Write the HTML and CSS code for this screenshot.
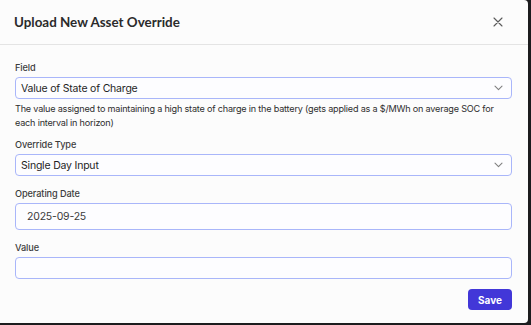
FILE: index.html
```html
<!DOCTYPE html>
<html>
<head>
<meta charset="utf-8">
<link rel="stylesheet" href="styles.css">
</head>
<body>
<div class="modal">
  <div class="modal-header">
    <h2 class="title">Upload New Asset Override</h2>
    <button class="close" aria-label="Close">
      <svg width="10" height="10" viewBox="0 0 10 10"><path d="M1 1 L9 9 M9 1 L1 9" stroke="#5a5a5a" stroke-width="1.1" stroke-linecap="round"/></svg>
    </button>
  </div>
  <div class="modal-body">
    <div class="field field-first">
      <label class="label">Field</label>
      <div class="control select">
        <span class="value">Value of State of Charge</span>
        <svg class="chev" width="9" height="6" viewBox="0 0 9 6"><path d="M1 1.2 L4.5 4.6 L8 1.2" fill="none" stroke="#808080" stroke-width="1.1" stroke-linecap="round" stroke-linejoin="round"/></svg>
      </div>
      <p class="help">The value assigned to maintaining a high state of charge in the battery (gets applied as a $/MWh on average SOC for each interval in horizon)</p>
    </div>
    <div class="field">
      <label class="label">Override Type</label>
      <div class="control select">
        <span class="value">Single Day Input</span>
        <svg class="chev" width="9" height="6" viewBox="0 0 9 6"><path d="M1 1.2 L4.5 4.6 L8 1.2" fill="none" stroke="#808080" stroke-width="1.1" stroke-linecap="round" stroke-linejoin="round"/></svg>
      </div>
    </div>
    <div class="field">
      <label class="label">Operating Date</label>
      <div class="control date">
        <span class="value date-value">2025-09-25</span>
      </div>
    </div>
    <div class="field field-last">
      <label class="label">Value</label>
      <div class="control"></div>
    </div>
    <div class="footer">
      <button class="save">Save</button>
    </div>
  </div>
</div>
</body>
</html>
```
FILE: styles.css
```css
html, body {
  margin: 0;
  padding: 0;
}
body {
  background: #1c1c1e;
  width: 531px;
  height: 325px;
  overflow: hidden;
  font-family: Inter, "Liberation Sans", sans-serif;
}
.modal {
  width: 528px;
  height: 323px;
  background: #fcfcfc;
  border-radius: 0 4px 4px 0;
  box-sizing: border-box;
}
.modal-header {
  height: 45px;
  box-sizing: border-box;
  border-bottom: 1px solid #e4e4e4;
  display: flex;
  align-items: center;
  justify-content: space-between;
  padding: 0 25px 0 14px;
}
.title {
  margin: 0;
  font-family: Lato, "Liberation Sans", sans-serif;
  font-weight: 700;
  font-size: 13.4px;
  color: #2b2b2b;
}
.close {
  border: 0;
  background: none;
  padding: 0;
  width: 10px;
  height: 10px;
  display: flex;
}
.modal-body {
  padding: 17px 16px 0 15px;
}
.field {
  display: flex;
  flex-direction: column;
  margin-bottom: 12px;
}
.field-first {
  margin-bottom: 9px;
}
.field-last {
  margin-bottom: 10px;
}
.label {
  font-size: 9.2px;
  line-height: 12px;
  letter-spacing: -0.1px;
  color: #3c3c3c;
  font-weight: 500;
  margin-bottom: 3px;
}
.control {
  height: 22px;
  box-sizing: border-box;
  border: 1px solid #a9b6fa;
  border-radius: 4px;
  background: #fdfdff;
  display: flex;
  align-items: center;
  padding: 0 8px 0 5px;
}
.select {
  justify-content: space-between;
}
.value {
  font-size: 10.5px;
  letter-spacing: -0.2px;
  color: #1f1f1f;
}
.date {
  height: 27px;
  padding-left: 11px;
}
.date-value {
  color: #3a3a3a;
}
.help {
  margin: 3px 0 0;
  font-size: 9.1px;
  line-height: 14px;
  letter-spacing: -0.2px;
  color: #2e2e2e;
}
.footer {
  display: flex;
  justify-content: flex-end;
}
.save {
  background: #4237d8;
  color: #fff;
  border: 0;
  border-radius: 4px;
  width: 44px;
  height: 21px;
  font-family: Inter, "Liberation Sans", sans-serif;
  font-weight: 700;
  font-size: 10px;
  padding: 0;
}
```
